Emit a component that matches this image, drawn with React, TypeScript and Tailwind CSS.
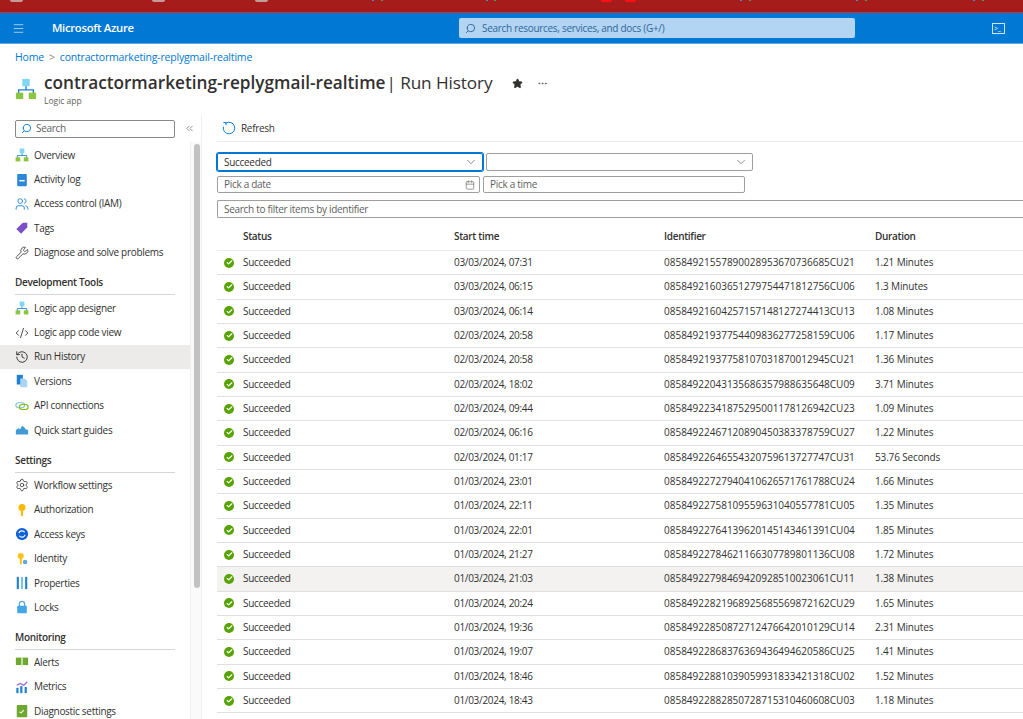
import React from 'react';
import { Menu, Search, Star, ChevronDown, ChevronsLeft, Calendar, History, Wrench, Settings, Users, Ellipsis, Check, CodeXml } from 'lucide-react';

const font = "font-['Open_Sans','Noto_Sans',sans-serif]";

const runs = [
  ['03/03/2024, 07:31', '08584921557890028953670736685CU21', '1.21 Minutes'],
  ['03/03/2024, 06:15', '08584921603651279754471812756CU06', '1.3 Minutes'],
  ['03/03/2024, 06:14', '08584921604257157148127274413CU13', '1.08 Minutes'],
  ['02/03/2024, 20:58', '08584921937754409836277258159CU06', '1.17 Minutes'],
  ['02/03/2024, 20:58', '08584921937758107031870012945CU21', '1.36 Minutes'],
  ['02/03/2024, 18:02', '08584922043135686357988635648CU09', '3.71 Minutes'],
  ['02/03/2024, 09:44', '08584922341875295001178126942CU23', '1.09 Minutes'],
  ['02/03/2024, 06:16', '08584922467120890450383378759CU27', '1.22 Minutes'],
  ['02/03/2024, 01:17', '08584922646554320759613727747CU31', '53.76 Seconds'],
  ['01/03/2024, 23:01', '08584922727940410626571761788CU24', '1.66 Minutes'],
  ['01/03/2024, 22:11', '08584922758109559631040557781CU05', '1.35 Minutes'],
  ['01/03/2024, 22:01', '08584922764139620145143461391CU04', '1.85 Minutes'],
  ['01/03/2024, 21:27', '08584922784621166307789801136CU08', '1.72 Minutes'],
  ['01/03/2024, 21:03', '08584922798469420928510023061CU11', '1.38 Minutes'],
  ['01/03/2024, 20:24', '08584922821968925685569872162CU29', '1.65 Minutes'],
  ['01/03/2024, 19:36', '08584922850872712476642010129CU14', '2.31 Minutes'],
  ['01/03/2024, 19:07', '08584922868376369436494620586CU25', '1.41 Minutes'],
  ['01/03/2024, 18:46', '08584922881039059931833421318CU02', '1.52 Minutes'],
  ['01/03/2024, 18:43', '08584922882850728715310460608CU03', '1.18 Minutes'],
];

const LogicIcon = ({ size = 14 }: { size?: number }) => (
  <svg width={size} height={size} viewBox="0 0 24 24">
    <rect x="8" y="1" width="8" height="8" fill="#7fd6f5" />
    <path d="M12 9v4M4 17v-4h16v4" fill="none" stroke="#1f7fd0" strokeWidth="1.5" />
    <rect x="1" y="16" width="8" height="7" fill="#8cc63f" />
    <rect x="15" y="16" width="8" height="7" fill="#8cc63f" />
  </svg>
);

const box = (children: React.ReactNode) => (
  <svg width="14" height="14" viewBox="0 0 16 16">{children}</svg>
);

const navIcons: Record<string, React.ReactNode> = {
  Overview: <LogicIcon />,
  'Activity log': box(<><rect x="2.5" y="1" width="11" height="14" rx="1" fill="#2b88d8" /><rect x="5" y="8" width="6" height="1.6" fill="#fff" /></>),
  'Access control (IAM)': <Users size={14} color="#2b88d8" strokeWidth={1.6} />,
  Tags: box(<path d="M1.5 9 9 2h5v5l-7 7.5z" fill="#7a4fc9" />),
  'Diagnose and solve problems': <Wrench size={14} color="#333" strokeWidth={1.4} />,
  'Logic app designer': <LogicIcon />,
  'Logic app code view': <CodeXml size={14} color="#333" strokeWidth={1.5} />,
  'Run History': <History size={14} color="#333" strokeWidth={1.6} />,
  Versions: box(<><path d="M2 1h7v11H2z" fill="#1f7fd0" /><path d="M6 5h5l3 3v7H6z" fill="#a9d5f5" /></>),
  'API connections': box(<><ellipse cx="6" cy="7" rx="5" ry="3" fill="none" stroke="#7fc4e8" strokeWidth="1.4" /><ellipse cx="10" cy="9" rx="5" ry="3" fill="none" stroke="#7fba00" strokeWidth="1.4" /></>),
  'Quick start guides': box(<path d="M1 13V8l3-2 2 1 2-4 3 2 1 2 3 1v5z" fill="#3f9bd8" />),
  'Workflow settings': <Settings size={14} color="#333" strokeWidth={1.4} />,
  Authorization: box(<><circle cx="8" cy="5" r="4" fill="#fcb900" /><path d="M6.8 8h2.4v6L8 15.5 6.8 14z" fill="#fcb900" /></>),
  'Access keys': box(<><circle cx="8" cy="8" r="7" fill="#0f62d6" /><path d="M4.5 7a3.6 3.6 0 0 1 6.5-1M11.5 9a3.6 3.6 0 0 1-6.5 1" fill="none" stroke="#fff" strokeWidth="1.4" /></>),
  Identity: box(<><circle cx="6.5" cy="4.5" r="3.5" fill="#fcc419" /><rect x="5.5" y="7" width="2.4" height="7" fill="#fcc419" /><circle cx="11.5" cy="11.5" r="2.6" fill="#5ea9dd" /></>),
  Properties: box(<><rect x="2" y="1" width="2.4" height="14" fill="#1f7fd0" /><rect x="6.8" y="1" width="2.4" height="14" fill="#7fc4f0" /><rect x="11.6" y="1" width="2.4" height="14" fill="#1f7fd0" /></>),
  Locks: box(<><path d="M5 7V4.5a3 3 0 0 1 6 0V7" fill="none" stroke="#5ea9dd" strokeWidth="1.5" /><rect x="2.5" y="6.5" width="11" height="8.5" rx="1" fill="#45a5e6" /></>),
  Alerts: box(<><rect x="1" y="3" width="14" height="8.5" fill="#6fa82f" /><rect x="7.2" y="3" width="1.6" height="11" fill="#e8f3d6" /></>),
  Metrics: box(<><rect x="1.5" y="9" width="2.5" height="6" fill="#1f7fd0" /><rect x="6" y="7" width="2.5" height="8" fill="#1f7fd0" /><rect x="11" y="8" width="2.5" height="7" fill="#1f7fd0" /><path d="M2 6l4-2 4 2 4-4" fill="none" stroke="#9b5fd0" strokeWidth="1.3" /></>),
  'Diagnostic settings': box(<><rect x="2" y="1" width="12" height="14" rx="1" fill="#6fa82f" /><path d="M5 9l2 1 3-3" fill="none" stroke="#fff" strokeWidth="1.2" /></>),
};

const nav: { title?: string; items: string[]; cls: string }[] = [
  { cls: 'pb-[1px]', items: ['Overview', 'Activity log', 'Access control (IAM)', 'Tags', 'Diagnose and solve problems'] },
  { cls: 'pt-[1px] pb-[2px]', title: 'Development Tools', items: ['Logic app designer', 'Logic app code view', 'Run History', 'Versions', 'API connections', 'Quick start guides'] },
  { cls: 'pb-[1px]', title: 'Settings', items: ['Workflow settings', 'Authorization', 'Access keys', 'Identity', 'Properties', 'Locks'] },
  { cls: 'pt-[0.6px]', title: 'Monitoring', items: ['Alerts', 'Metrics', 'Diagnostic settings'] },
];

const Sidebar = () => (
  <aside className="w-[202px] shrink-0 flex border-r border-[#eeeeee]">
    <div className="w-[190px] shrink-0">
      <div className="pl-[15px] pt-[3px] flex items-center h-[24px]">
        <div className="w-[160px] shrink-0 h-[18px] border border-[#8a8886] rounded-[2px] flex items-center pl-[5px] gap-[4px]">
          <Search size={11} color="#0078d4" className="-scale-x-100" />
          <span className="text-[10px] text-[#605e5c]">Search</span>
        </div>
        <ChevronsLeft size={11} color="#8a8886" className="ml-[9px] shrink-0" />
      </div>
      <div className="mt-[4px]">
        {nav.map((s, i) => (
          <div key={i}>
            {s.title && (
              <div className="mx-[15px] mt-[5px] h-[24px] flex items-center border-b border-[#d6d6d6] text-[10px] font-semibold text-[#323130]">
                {s.title}
              </div>
            )}
            <div className={s.cls}>
              {s.items.map((item) => (
                <div key={item} className={`h-[24.4px] flex items-center pl-[15px] gap-[5px] text-[10px] text-[#323130] ${item === 'Run History' ? 'bg-[#edebe9]' : ''}`}>
                  <span className="w-[14px] h-[14px] flex items-center justify-center shrink-0">{navIcons[item]}</span>
                  {item}
                </div>
              ))}
            </div>
          </div>
        ))}
      </div>
    </div>
    <div className="w-[12px] mt-[27px] pl-[3px] pt-[2px] bg-[#fafafa] border-l border-[#efefef]">
      <div className="w-[6px] h-[444px] rounded-[3px] bg-[#c2c2c2]" />
    </div>
  </aside>
);

const Select = ({ value, focused, width }: { value?: string; focused?: boolean; width: string }) => (
  <div className={`${width} h-[18px] rounded-[2px] flex items-center justify-between pl-[6px] pr-[4px] text-[10px] text-[#323130] border ${focused ? 'border-[#0078d4] shadow-[0_0_0_1px_#0078d4]' : 'border-[#a19f9d]'}`}>
    <span>{value}</span>
    <ChevronDown size={14} color="#605e5c" strokeWidth={1.2} />
  </div>
);

const Row = ({ run, hover }: { run: string[]; hover?: boolean }) => (
  <div className={`h-[24.33px] flex items-center border-b-[1.4px] border-[#e1dfdd] text-[10px] text-[#323130] ${hover ? 'bg-[#f3f2f1]' : ''}`}>
    <span className="w-[26px] shrink-0 pl-[7px]">
      <span className="w-[10px] h-[10px] rounded-full bg-[#57a300] flex items-center justify-center">
        <Check size={7} color="#fff" strokeWidth={4} />
      </span>
    </span>
    <span className="w-[211px] shrink-0">Succeeded</span>
    <span className="w-[210px] shrink-0">{run[0]}</span>
    <span className="w-[211px] shrink-0 tracking-normal">{run[1]}</span>
    <span className="tracking-[-0.15px]">{run[2]}</span>
  </div>
);

export default function App() {
  return (
    <div className={`w-[1023px] h-[719px] overflow-hidden bg-white flex flex-col tracking-[-0.3px] ${font}`}>
      <div className="h-[13px] shrink-0 bg-[#a61c1a] border-b border-[#b9383a] flex items-start">
        <span className="ml-[10px] w-[13px] h-[2px] rounded-b bg-[#c99a9a]" />
        <span className="ml-[129px] w-[13px] h-[2px] rounded-b bg-[#c99a9a]" />
        <span className="ml-[90px] w-[13px] h-[2px] rounded-b bg-[#c99a9a]" />
        <span className="ml-[104px] w-[2px] h-px bg-[#3f8fd8]" />
        <span className="ml-[7px] w-[2px] h-px bg-[#3aa655]" />
        <span className="ml-[103px] w-[2px] h-px bg-[#3f8fd8]" />
        <span className="ml-[6px] w-[2px] h-px bg-[#3aa655]" />
        <span className="ml-[105px] w-[11px] h-[2px] rounded-b-full bg-[#ff1010]" />
        <span className="ml-[13px] w-[11px] h-[2px] rounded-b-full bg-[#ff1010]" />
        <span className="ml-[104px] w-[2px] h-px bg-[#3f8fd8]" />
        <span className="ml-[7px] w-[2px] h-px bg-[#3aa655]" />
        <span className="ml-[105px] w-[2px] h-px bg-[#3f8fd8]" />
        <span className="ml-[7px] w-[2px] h-px bg-[#3aa655]" />
        <span className="ml-[106px] w-[2px] h-px bg-[#3f8fd8]" />
        <span className="ml-[7px] w-[2px] h-px bg-[#3aa655]" />
      </div>
      <header className="h-[31px] shrink-0 bg-[#0078d4] border-b border-[#5aa9e6] flex items-center text-white">
        <Menu size={13} strokeWidth={1.4} className="ml-[12px] text-[#cfe4f7]" />
        <span className="ml-[27px] text-[11.3px] font-semibold w-[407px]">Microsoft Azure</span>
        <div className="w-[396px] h-[20px] bg-[#b1d5f2] rounded-[2px] flex items-center pl-[6px] gap-[6px] text-[10px] text-[#31659b]">
          <Search size={11} color="#31659b" className="-scale-x-100" />
          Search resources, services, and docs (G+/)
        </div>
        <div className="ml-[137px] w-[13px] h-[11px] border border-[#cfe4f7] flex items-center text-[7px] leading-none pl-px">
          &gt;_
        </div>
      </header>
      <div className="pl-[15px] h-[26px] shrink-0 flex items-end gap-[5px] text-[10.5px] tracking-[-0.18px] text-[#0078d4] pb-[4px]">
        <span>Home</span>
        <span className="text-[#8a8886]">&gt;</span>
        <span>contractormarketing-replygmail-realtime</span>
      </div>
      <div className="pl-[15px] h-[40px] shrink-0 flex items-start pt-[3px] tracking-normal">
        <span className="mt-[5px]"><LogicIcon size={22} /></span>
        <div className="ml-[7px]">
          <div className="text-[17.2px] leading-[20px] text-[#323130] whitespace-nowrap flex items-center">
            <span className="font-semibold">contractormarketing-replygmail-realtime</span>
            <span className="ml-[1px] font-normal tracking-[-0.1px]">| Run History</span>
            <Star size={11} fill="#323130" color="#323130" className="ml-[19px]" />
            <Ellipsis size={11} color="#605e5c" className="ml-[14px]" />
          </div>
          <div className="mt-[2px] text-[8.5px] text-[#605e5c] leading-[12px]">Logic app</div>
        </div>
      </div>
      <div className="flex flex-1 min-h-0 mt-[5px]">
        <Sidebar />
        <main className="flex-1 min-w-0">
          <div className="h-[27px] ml-[15px] border-b border-[#edebe9] flex items-center pl-[5px] gap-[5px] text-[10px] text-[#323130]">
            <svg width="14" height="14" viewBox="0 0 16 16" fill="none" stroke="#0078d4" strokeWidth="1.1">
              <path d="M4.2 2.6A6.6 6.6 0 1 1 1.6 6.4" />
              <path d="M1.6 1.8h3v3" />
            </svg>
            Refresh
          </div>
          <div className="pl-[15px] pt-[11px]">
            <div className="flex gap-[3px]">
              <Select value="Succeeded" focused width="w-[266px]" />
              <Select width="w-[267px]" />
            </div>
            <div className="flex gap-[3px] mt-[5px]">
              <div className="w-[263px] h-[17px] border border-[#a19f9d] rounded-[2px] flex items-center justify-between pl-[6px] pr-[4px] text-[10px] text-[#605e5c]">
                Pick a date
                <Calendar size={10} color="#8a8886" />
              </div>
              <div className="w-[262px] h-[17px] border border-[#a19f9d] rounded-[2px] flex items-center pl-[6px] text-[10px] text-[#605e5c]">
                Pick a time
              </div>
            </div>
            <div className="mt-[7px] h-[18px] border border-[#a19f9d] rounded-l-[2px] border-r-0 flex items-center pl-[6px] text-[10px] text-[#605e5c]">
              Search to filter items by identifier
            </div>
            <div className="h-[28px] mt-[5px] flex items-center pl-[26px] border-b border-[#edebe9] text-[10px] font-semibold text-[#323130]">
              <span className="w-[211px] shrink-0">Status</span>
              <span className="w-[210px] shrink-0">Start time</span>
              <span className="w-[211px] shrink-0">Identifier</span>
              <span>Duration</span>
            </div>
            {runs.map((run, i) => (
              <Row key={run[1]} run={run} hover={i === 13} />
            ))}
          </div>
        </main>
      </div>
    </div>
  );
}
